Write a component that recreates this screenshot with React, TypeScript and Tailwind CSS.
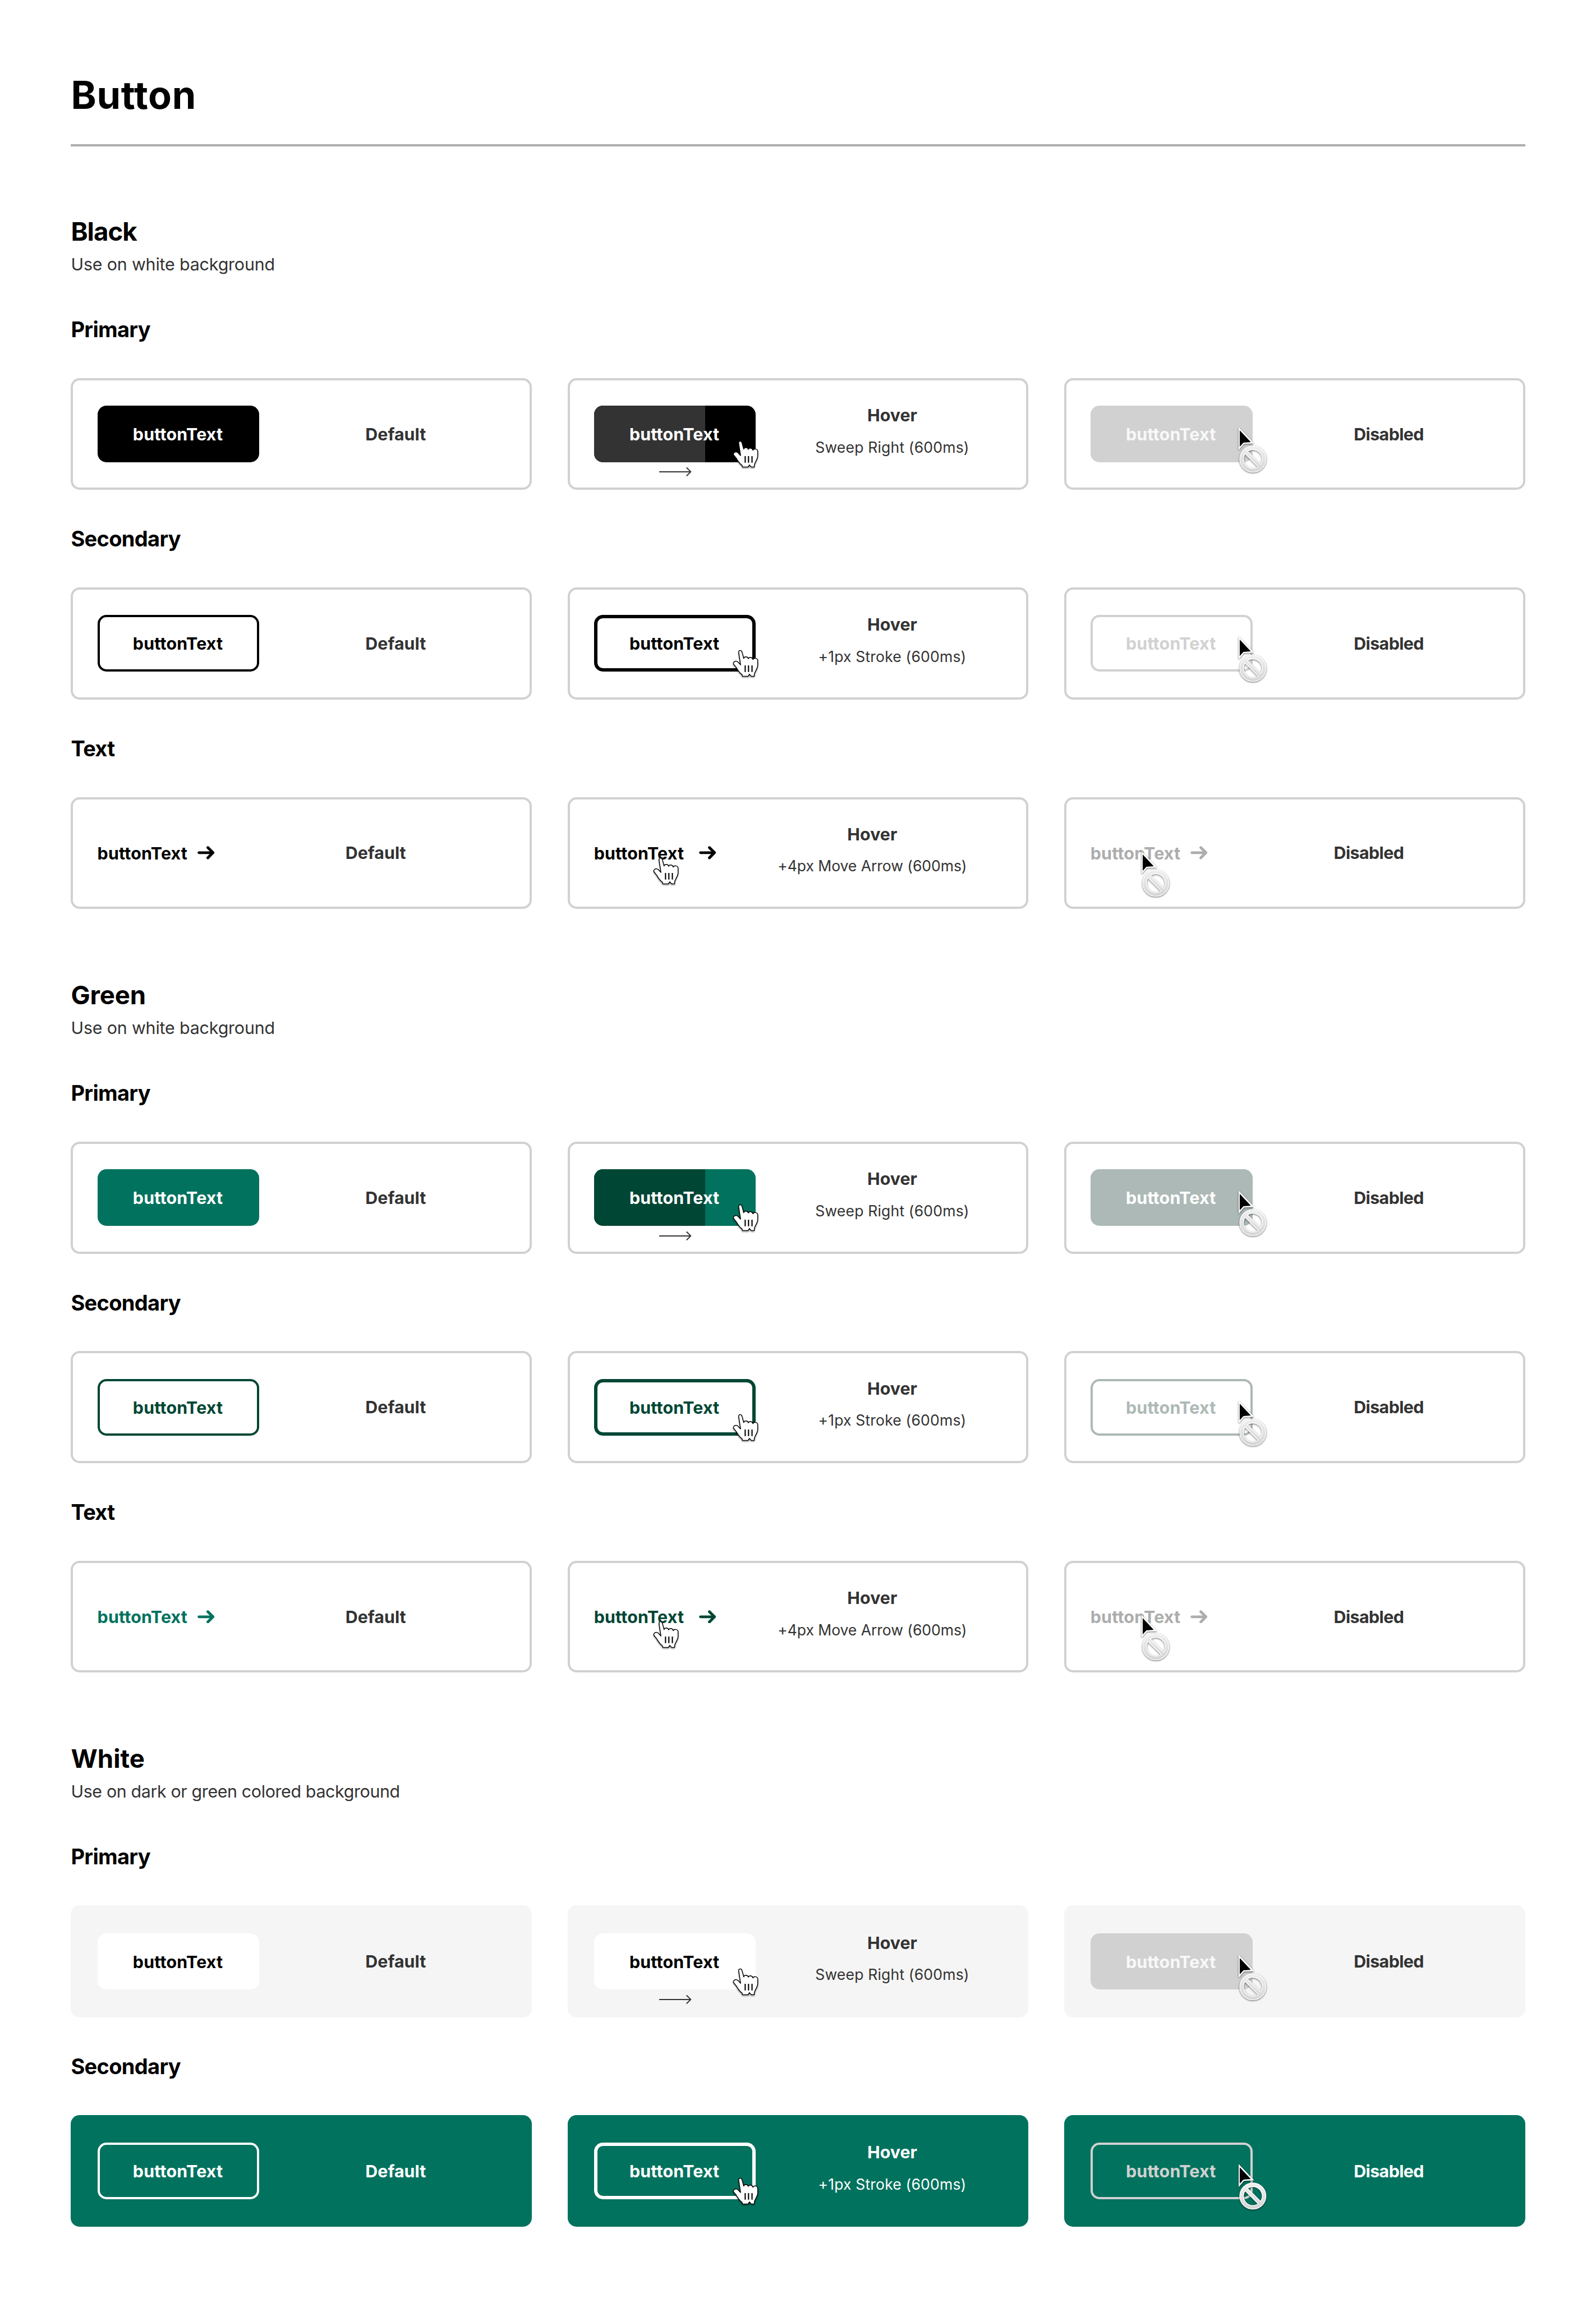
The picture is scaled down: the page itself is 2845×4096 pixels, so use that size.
import type { ReactNode } from "react";

type State = "default" | "hover" | "disabled";
type Kind = "Primary" | "Secondary" | "Text";

const STATES: State[] = ["default", "hover", "disabled"];

function HandCursor({ className }: { className: string }) {
  return (
    <svg
      viewBox="0 0 145 155"
      className={`absolute h-[51px] w-[47.7px] overflow-visible drop-shadow-[0_2px_1px_rgba(0,0,0,0.4)] ${className}`}
    >
      <path
        d="M33 17 C30 1 48 0 51 14 L60 47 C63 37 81 35 85 49 C88 39 106 39 110 53 C113 44 135 43 136 59 L136 85 C136 101 120 120 118 132 L117 144 L101 144 L91 133 L84 144 L53 144 L51 135 C36 125 28 110 20 97 L6 80 C-1 68 16 56 28 66 L43 82 Z"
        fill="#fff"
        stroke="#000"
        strokeWidth="4.4"
        strokeLinejoin="round"
      />
      <path d="M68 85V121M86 85V121M105 85V121" stroke="#000" strokeWidth="6.5" fill="none" />
    </svg>
  );
}

function BlockedCursor({ className }: { className: string }) {
  return (
    <svg
      viewBox="0 0 165 265"
      className={`absolute h-[87.3px] w-[54.3px] overflow-visible drop-shadow-[0_1.5px_1.5px_rgba(0,0,0,0.6)] ${className}`}
    >
      <defs>
        <linearGradient id="blocked" gradientUnits="userSpaceOnUse" x1="0" y1="107" x2="0" y2="253">
          <stop offset="0" stopColor="#f0f0f0" />
          <stop offset="1" stopColor="#d4d4d4" />
        </linearGradient>
      </defs>
      <path d="M9 7V131L38 98L93 95Z" fill="#fff" />
      <path d="M15 24V113L35 91L75 88Z" fill="#000" />
      <g fill="none" stroke="#fff">
        <circle cx="86" cy="180" r="61" strokeWidth="24" />
        <path d="M44 138L128 222" strokeWidth="23" />
      </g>
      <g fill="none" stroke="url(#blocked)">
        <circle cx="86" cy="180" r="61" strokeWidth="16" />
        <path d="M44 138L128 222" strokeWidth="15" />
      </g>
    </svg>
  );
}

function SweepArrow() {
  return (
    <svg
      viewBox="0 0 59 16"
      className="absolute top-[159.7px] left-[163px] h-[15.8px] w-[58.3px]"
      fill="none"
      stroke="#333"
      strokeWidth="2"
    >
      <path d="M0 8H57" />
      <path d="M50 1L57 8L50 15" strokeLinecap="round" strokeLinejoin="round" />
    </svg>
  );
}

function TextArrow({ className }: { className: string }) {
  return (
    <svg
      viewBox="0 0 31 24"
      className={`h-[23.7px] w-[30.6px] shrink-0 ${className}`}
      fill="none"
      stroke="currentColor"
      strokeWidth="5"
      strokeLinecap="round"
      strokeLinejoin="round"
    >
      <path d="M2.7 12H27.5" />
      <path d="M18.8 2.8L28 12L18.8 21.2" />
    </svg>
  );
}

function ButtonLabel() {
  return (
    <span className="pt-px text-[30.4px] leading-[40px] font-bold tracking-[0.15px] whitespace-nowrap">
      buttonText
    </span>
  );
}

function BoxButton({ className, sweep }: { className: string; sweep?: string }) {
  return (
    <div
      className={`relative flex h-[100.8px] w-[288.5px] shrink-0 items-center justify-center overflow-hidden rounded-[15.8px] ${className}`}
    >
      {sweep && <div className={`absolute inset-y-0 left-0 w-[197.6px] ${sweep}`} />}
      <span className="relative -left-px flex">
        <ButtonLabel />
      </span>
    </div>
  );
}

function TextButton({ className, arrow }: { className: string; arrow: string }) {
  return (
    <div className={`flex w-[217.3px] shrink-0 items-center ${className}`}>
      <span className="flex w-[162px] justify-center pr-0.5">
        <ButtonLabel />
      </span>
      <TextArrow className={arrow} />
    </div>
  );
}

function Card({
  kind,
  state,
  surface,
  children,
}: {
  kind: Kind;
  state: State;
  surface: string;
  children: ReactNode;
}) {
  const isText = kind === "Text";
  return (
    <div className={`relative flex h-[199.5px] items-center rounded-[15.8px] pl-[47.4px] ${surface}`}>
      {children}
      <div className="flex flex-1 flex-col items-center">
        {state === "default" && <div className="pt-px text-[30.4px] leading-[46.6px] font-bold">Default</div>}
        {state === "disabled" && (
          <div className="pt-px text-[30.4px] leading-[46.6px] font-bold tracking-[-0.6px]">Disabled</div>
        )}
        {state === "hover" && (
          <>
            <div className="text-[30.4px] leading-[46.6px] font-bold">Hover</div>
            <div
              className={`mb-[-1px] text-[26.6px] leading-[67.4px] whitespace-nowrap ${
                isText ? "tracking-[-0.08px]" : "tracking-[0.15px]"
              }`}
            >
              {kind === "Primary" && "Sweep Right (600ms)"}
              {kind === "Secondary" && "+1px Stroke (600ms)"}
              {kind === "Text" && "+4px Move Arrow (600ms)"}
            </div>
          </>
        )}
      </div>
      {kind === "Primary" && state === "hover" && <SweepArrow />}
      {state === "hover" && (
        <HandCursor className={isText ? "top-[107.2px] left-[152.5px]" : "top-[111.3px] left-[294.4px]"} />
      )}
      {state === "disabled" && (
        <BlockedCursor className={isText ? "top-[94.1px] left-[135.8px]" : "top-[85.3px] left-[307.9px]"} />
      )}
    </div>
  );
}

type Look = { className: string; sweep?: string };
type Row = { kind: Kind; surface: string; looks: Record<State, Look> };
type Group = { title: string; titleClass: string; note: string; noteClass: string; rows: Row[] };

const OUTLINED = "bg-white text-[#333] ring-4 ring-inset ring-[#d1d1d1]";

const GROUPS: Group[] = [
  {
    title: "Black",
    titleClass: "tracking-[-1px]",
    note: "Use on white background",
    noteClass: "tracking-[-0.17px]",
    rows: [
      {
        kind: "Primary",
        surface: OUTLINED,
        looks: {
          default: { className: "bg-black text-white" },
          hover: { className: "bg-black text-white", sweep: "bg-[#333]" },
          disabled: { className: "bg-[#d1d1d1] text-[#f8f8f8]" },
        },
      },
      {
        kind: "Secondary",
        surface: OUTLINED,
        looks: {
          default: { className: "border-4 border-black text-black" },
          hover: { className: "border-6 border-black text-black" },
          disabled: { className: "border-4 border-[#d1d1d1] text-[#d1d1d1]" },
        },
      },
      {
        kind: "Text",
        surface: OUTLINED,
        looks: {
          default: { className: "text-black" },
          hover: { className: "text-black" },
          disabled: { className: "text-[#adadad]" },
        },
      },
    ],
  },
  {
    title: "Green",
    titleClass: "tracking-[-0.2px]",
    note: "Use on white background",
    noteClass: "tracking-[-0.17px]",
    rows: [
      {
        kind: "Primary",
        surface: OUTLINED,
        looks: {
          default: { className: "bg-[#00725e] text-white" },
          hover: { className: "bg-[#00725e] text-white", sweep: "bg-[#004634]" },
          disabled: { className: "bg-[#adb9b6] text-white" },
        },
      },
      {
        kind: "Secondary",
        surface: OUTLINED,
        looks: {
          default: { className: "border-4 border-[#004634] text-[#004634]" },
          hover: { className: "border-6 border-[#004634] text-[#004634]" },
          disabled: { className: "border-4 border-[#adb9b6] text-[#adb9b6]" },
        },
      },
      {
        kind: "Text",
        surface: OUTLINED,
        looks: {
          default: { className: "text-[#00725e]" },
          hover: { className: "text-[#004634]" },
          disabled: { className: "text-[#adadad]" },
        },
      },
    ],
  },
  {
    title: "White",
    titleClass: "tracking-[0px]",
    note: "Use on dark or green colored background",
    noteClass: "tracking-[-0.37px]",
    rows: [
      {
        kind: "Primary",
        surface: "bg-[#f5f5f5] text-[#333]",
        looks: {
          default: { className: "bg-white text-black" },
          hover: { className: "bg-white text-black" },
          disabled: { className: "bg-[#d1d1d1] text-[#f8f8f8]" },
        },
      },
      {
        kind: "Secondary",
        surface: "bg-[#00725e] text-white",
        looks: {
          default: { className: "border-4 border-white text-white" },
          hover: { className: "border-6 border-white text-white" },
          disabled: { className: "border-4 border-[#d1d1d1] text-[#d1d1d1]" },
        },
      },
    ],
  },
];

export default function App() {
  return (
    <main className="h-[4096px] w-[2845px] bg-white px-[126.45px] font-['Inter',sans-serif] text-black [font-feature-settings:'calt'_0]">
      <header className="mb-[121.8px] border-b-4 border-[#adadad] pt-[82px]">
        <h1 className="text-[68.4px] leading-[175px] font-bold tracking-[0.7px]">Button</h1>
      </header>
      <div className="flex flex-col gap-[124.1px]">
        {GROUPS.map((group) => (
          <section key={group.title}>
            <h2 className={`text-[45.6px] leading-[59px] font-bold ${group.titleClass}`}>{group.title}</h2>
            <p className={`pt-px text-[30.4px] leading-[57px] text-[#333] ${group.noteClass}`}>{group.note}</p>
            {group.rows.map((row) => (
              <div key={row.kind}>
                <h3 className="pt-0.5 text-[38px] leading-[171.9px] font-bold tracking-[-0.7px]">{row.kind}</h3>
                <div className="grid grid-cols-3 gap-[63.2px]">
                  {STATES.map((state) => (
                    <Card key={state} kind={row.kind} state={state} surface={row.surface}>
                      {row.kind === "Text" ? (
                        <TextButton
                          className={row.looks[state].className}
                          arrow={state === "hover" ? "ml-[25.3px]" : "ml-[15.8px]"}
                        />
                      ) : (
                        <BoxButton {...row.looks[state]} />
                      )}
                    </Card>
                  ))}
                </div>
              </div>
            ))}
          </section>
        ))}
      </div>
    </main>
  );
}
